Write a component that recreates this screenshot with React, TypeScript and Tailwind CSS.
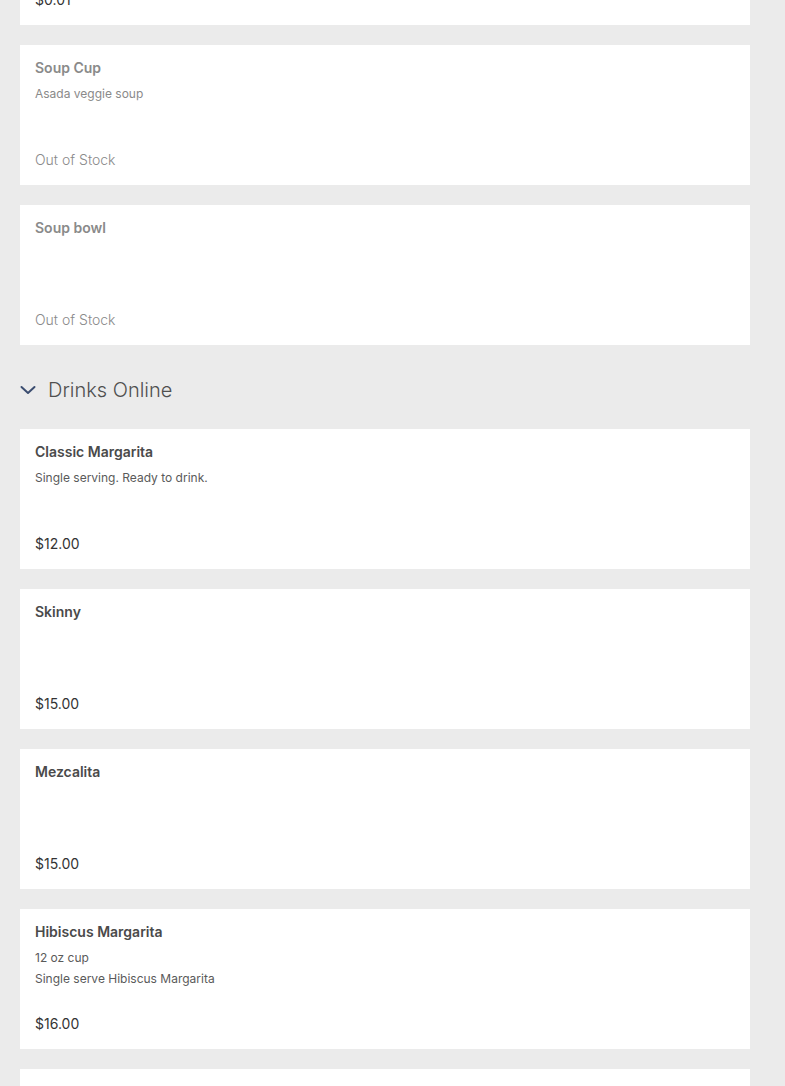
import React from "react";

type Item = {
  name: string;
  lines?: string[];
  price?: string;
  outOfStock?: boolean;
};

const soups: Item[] = [
  { name: "Soup Cup", lines: ["Asada veggie soup"], outOfStock: true },
  { name: "Soup bowl", outOfStock: true },
];

const drinks: Item[] = [
  { name: "Classic Margarita", lines: ["Single serving. Ready to drink."], price: "$12.00" },
  { name: "Skinny", price: "$15.00" },
  { name: "Mezcalita", price: "$15.00" },
  { name: "Hibiscus Margarita", lines: ["12 oz cup", "Single serve Hibiscus Margarita"], price: "$16.00" },
  { name: "Paloma Pitcher", price: "$40.00" },
];

const ItemCard = ({ item }: { item: Item }) => {
  const muted = item.outOfStock;
  return (
    <div className="flex flex-col justify-between w-[730px] h-[140px] bg-white px-[15px] pt-[14px] pb-[15px]">
      <div className="flex flex-col">
        <p className={`text-[14px] leading-[18px] font-semibold ${muted ? "text-[#8a8a8a]" : "text-[#4a4a4a]"}`}>
          {item.name}
        </p>
        {item.lines && (
          <div className="mt-[6px] flex flex-col">
            {item.lines.map((l) => (
              <p key={l} className={`text-[12px] leading-[21px] ${muted ? "text-[#8a8a8a]" : "text-[#5a5a5a]"}`}>
                {l}
              </p>
            ))}
          </div>
        )}
      </div>
      <p className={`text-[14px] leading-[20px] ${muted ? "text-[#8a8a8a] font-light" : "text-[#333333]"}`}>
        {item.outOfStock ? "Out of Stock" : item.price}
      </p>
    </div>
  );
};

const App = () => {
  return (
    <div
      className="w-full min-h-screen bg-[#ebebeb] px-5 overflow-hidden h-[1086px]"
      style={{ fontFamily: "Inter, 'Noto Sans', sans-serif" }}
    >
      <div className="flex flex-col gap-5 -mt-[115px]">
        <ItemCard item={{ name: "Soup Sample", price: "$0.01" }} />
        {soups.map((s) => (
          <ItemCard key={s.name} item={s} />
        ))}
      </div>

      <div className="flex flex-row items-center gap-3 mt-[31px] mb-[25px] h-[28px]">
        <svg width="16" height="10" viewBox="0 0 16 10" fill="none">
          <path d="M1.5 2 L8 8 L14.5 2" stroke="#3b4d70" strokeWidth="2" strokeLinecap="round" strokeLinejoin="round" />
        </svg>
        <h2 className="text-[20px] leading-[28px] font-light text-[#4f4f4f]">Drinks Online</h2>
      </div>

      <div className="flex flex-col gap-5">
        {drinks.map((d) => (
          <ItemCard key={d.name} item={d} />
        ))}
      </div>
    </div>
  );
};

export default App;
